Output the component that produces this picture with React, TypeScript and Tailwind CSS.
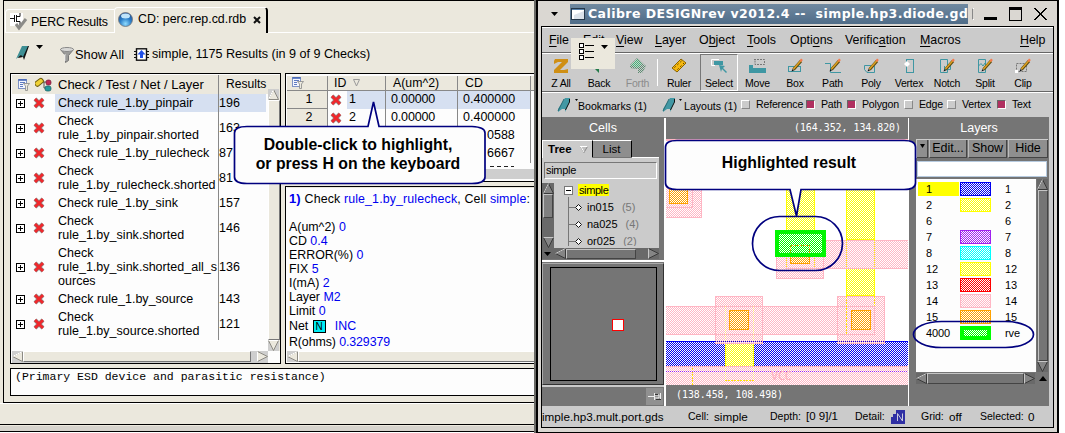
import React from "react";

const SANS = "font-['Liberation_Sans',Arial,sans-serif]";
const RAISED = "border border-t-white border-l-white border-b-[#777] border-r-[#777]";
const DARK_RAISED = "border border-t-[#c4c4c4] border-l-[#c4c4c4] border-b-[#444] border-r-[#444]";

/* ---------- icons ---------- */
const Cross = () => (
  <svg width="12" height="12" viewBox="0 0 12 12" className="shrink-0">
    <path d="M2 2L10 10M10 2L2 10" stroke="#8a8583" strokeWidth="4" />
    <path d="M2 2L10 10M10 2L2 10" stroke="#f0282c" strokeWidth="2.8" />
  </svg>
);
const Plus = () => (
  <svg width="9" height="9" viewBox="0 0 9 9" className="shrink-0" shapeRendering="crispEdges">
    <rect x=".5" y=".5" width="8" height="8" fill="#fff" stroke="#000" />
    <path d="M2 4.5H7M4.5 2V7" stroke="#000" />
  </svg>
);
const Marker = ({ dark = false }: { dark?: boolean }) => (
  <svg width="14" height="16" viewBox="0 0 14 16" className="shrink-0">
    {dark ? (
      <>
        <path d="M7 1H13L8 15L7 12L2 13Z" fill="#111" />
        <path d="M6 1H12L7 12L5 10L0 14Z" fill="#3e8f94" />
      </>
    ) : (
      <>
        <path d="M8 1H13V4L8 15V12L5 12L1 15V12Z" fill="#4398a4" />
        <path d="M12.5 2V5L8.5 13" stroke="#111" fill="none" />
        <path d="M1 14L7 2" stroke="#286b74" fill="none" />
      </>
    )}
  </svg>
);
const Down = ({ className = "" }: { className?: string }) => (
  <svg width="7" height="4" viewBox="0 0 7 4" className={"shrink-0 " + className}>
    <path d="M0 0H7L3.5 4Z" fill="#000" />
  </svg>
);
const PageFilter = () => (
  <svg width="12" height="12" viewBox="0 0 12 12" className="shrink-0">
    <rect x=".5" y=".5" width="8" height="9" fill="#f4f6ff" stroke="#7f93c4" />
    <path d="M.5 1H8.5" stroke="#3b5fb5" strokeWidth="1.5" />
    <path d="M2 3.5H7M2 5.5H5M2 7.5H5" stroke="#5f7bc0" />
    <path d="M5.500 4.500H11.500L9.500 7V11.500H7.500V7Z" fill="#eceadf" stroke="#888" strokeWidth=".8" />
  </svg>
);
const Arrow = ({ dir, dark = false }: { dir: "up" | "down" | "left" | "right"; dark?: boolean }) => {
  const d = { up: "M5 0L10 10H0Z", down: "M0 0H10L5 10Z", left: "M0 5L10 0V10Z", right: "M0 0L10 5L0 10Z" }[dir];
  return (
    <svg width="11" height="11" viewBox="-.5 -.5 11 11" className={"shrink-0 " + (dark ? "bg-[#696969]" : "bg-[#cecece]")}>
      <path d={d} fill={dark ? "#858585" : "#ebe8dd"} stroke={dark ? "#3a3a3a" : "#8c8a83"} />
      <path d={dir === "down" || dir === "right" ? "M0 0" + (dir === "down" ? "H10" : "V10") : dir === "up" ? "M5 0L0 10" : "M0 5L10 0"} fill="none" stroke={dark ? "#c8c8c8" : "#fff"} />
    </svg>
  );
};
const Pencil = () => (
  <>
    <path d="M7.500 11.500L15 3" stroke="#5a4a10" strokeWidth="3" />
    <path d="M7.500 11L15 2.500" stroke="#dda022" strokeWidth="1.600" />
    <path d="M14.300 3.200L16 1.300" stroke="#f47a4c" strokeWidth="2.400" />
    <path d="M5.500 13.500L6.500 11L8 12.500Z" fill="#111" />
  </>
);
const ToolIcon = ({ name }: { name: string }) => {
  const t = "#3f97a3";
  const art: Record<string, React.ReactNode> = {
    "Z All": <path d="M3 1H16V4L8 12H12L16 11V15H2V12L10 4H6L2 6V3Z" fill="#cf8f14" />,
    Back: <path d="M1 7L9 0V4H17V10H9V15Z" fill="#237a48" />,
    Forth: (
      <>
        <path d="M1 7L8 0L17 8L13 15H9V11L1 10Z" fill="#5d8c72" />
        <path d="M2 7L8 1L13 6L8 10Z" fill="#3fb878" />
        <path d="M1 7L8 0L17 8L13 15H9V11L1 10Z" fill="url(#stip)" />
      </>
    ),
    Ruler: (
      <>
        <path d="M2 10L11 1L16 5L7 14Z" fill="#f6b910" stroke="#8a6200" />
        <path d="M4.500 9.500L11.500 3M7.500 11.500L14 5" stroke="#3c2b00" strokeDasharray="1.500 2.500" />
      </>
    ),
    Select: (
      <>
        <path d="M1.500 1.500H9M1.500 1.500V7.500H5" stroke="#fff" fill="none" />
        <rect x="4" y="3" width="9" height="4" fill={t} />
        <path d="M9 7L15 8L13 10L17 14L16 15L12 11L11 14Z" fill={t} />
      </>
    ),
    Move: (
      <>
        <path d="M5 1.500H15.500V6.500H6V1" stroke="#777" strokeDasharray="2 1" fill="none" />
        <path d="M0 7H4V10H17V15H0Z" fill={t} />
      </>
    ),
    Box: (
      <>
        <rect x="2.500" y="8.500" width="12" height="5" fill="none" stroke={t} />
        <Pencil />
      </>
    ),
    Path: (
      <>
        <path d="M1 5.500H6.500V14.500H17" fill="none" stroke={t} />
        <Pencil />
      </>
    ),
    Poly: (
      <>
        <path d="M9 7.500H2.500V11.500L5 14.500H12.500V8" fill="none" stroke={t} />
        <Pencil />
      </>
    ),
    Vertex: (
      <>
        <rect x="6.500" y="1.500" width="7" height="13" fill="none" stroke={t} />
        <path d="M7 3L10 6L7 9L4 6Z" fill="#fff" />
      </>
    ),
    Notch: (
      <>
        <path d="M2.500 1.500H9.500V7.500H12.500V11.500H6.500V8M2.500 1.500V14.500H9.500V12" fill="none" stroke={t} />
        <Pencil />
      </>
    ),
    Split: (
      <>
        <path d="M2.500 1.500H9.500V14.500H2.500ZM2.500 8L5 5.500L7 8L9 5" fill="none" stroke={t} />
        <Pencil />
      </>
    ),
    Clip: (
      <>
        <path d="M2.500 5.500H12.500V13.500H2.500Z" fill="none" stroke="#777" strokeDasharray="2 1" />
        <Pencil />
        <rect x="1" y="12" width="3" height="3" fill="#fff" />
      </>
    ),
  };
  return (
    <svg width="18" height="16" viewBox="0 0 18 16" className="block">
      <defs>
        <pattern id="stip" width="2" height="2" patternUnits="userSpaceOnUse">
          <path d="M0 0h1v1H0zM1 1h1v1H1z" fill="#cbcbcb" />
        </pattern>
      </defs>
      {art[name]}
    </svg>
  );
};

/* ---------- results window ---------- */
const checks = [
  { lines: ["Check rule_1.by_pinpair"], n: "196", sel: true },
  { lines: ["Check", "rule_1.by_pinpair.shorted"], n: "163" },
  { lines: ["Check rule_1.by_rulecheck"], n: "87" },
  { lines: ["Check", "rule_1.by_rulecheck.shorted"], n: "81" },
  { lines: ["Check rule_1.by_sink"], n: "157" },
  { lines: ["Check", "rule_1.by_sink.shorted"], n: "146" },
  { lines: ["Check", "rule_1.by_sink.shorted_all_s", "ources"], n: "136" },
  { lines: ["Check rule_1.by_source"], n: "143" },
  { lines: ["Check", "rule_1.by_source.shorted"], n: "121" },
];

const CheckTable = () => (
  <div className="flex h-[291px] w-[271px] shrink-0 flex-col border border-black bg-[#fdfdfd] pt-px pl-px">
    <div className="flex h-[276px]">
      <div className="w-[256px] shrink-0">
        <div className="flex h-[19px] items-center bg-[#ebe8dd]">
          <div className="ml-[6px] w-[17px]"><PageFilter /></div>
          <svg width="17" height="15" viewBox="0 0 17 15" className="shrink-0">
            <path d="M8 5H11M9 5V11H12" stroke="#555" fill="none" />
            <rect x="0" y="3" width="9" height="5" rx="2" transform="rotate(-38 4 6)" fill="#eed034" stroke="#6d5c10" />
            <rect x="11" y="3" width="5" height="5" rx="2" fill="#c22753" stroke="#6c1a34" strokeWidth=".7" />
            <rect x="10" y="9" width="6" height="5" rx="2" fill="#259a9e" stroke="#155c60" strokeWidth=".7" />
          </svg>
          <span className="ml-[6px] w-[160px] text-[13px]">Check / Test / Net / Layer</span>
          <span className="h-full border-l border-[#888] pl-[7px] text-[12.1px] leading-[18px]">Results</span>
        </div>
        {checks.map((c) => (
          <div key={c.lines.join()} className="flex">
            <div className="flex w-[43px] shrink-0 items-center py-[2px] pl-[4px]">
              <Plus />
              <div className="ml-[8px]"><Cross /></div>
            </div>
            <div className={"w-[163px] shrink-0 py-[2px] pl-[3px] text-[12.5px] leading-[14px] tracking-[0.02px] whitespace-nowrap " + (c.sel ? "bg-[#d6e0f1]" : "")}>
              {c.lines.map((l) => <div key={l}>{l}</div>)}
            </div>
            <div className={"flex w-[48px] items-center border-l border-[#888] text-[12.5px] leading-[14px] " + (c.sel ? "bg-[#d6e0f1]" : "")}>{c.n}</div>
          </div>
        ))}
      </div>
      <div className="flex w-[12px] flex-col bg-[#ebe8dd] pt-[14px]">
        <Arrow dir="up" />
        <div className={"flex-1 bg-[#ebe8dd] " + RAISED} />
        <Arrow dir="down" />
      </div>
    </div>
    <div className="flex h-[12px] w-[256px] bg-[#cecece]">
      <Arrow dir="left" />
      <div className={"h-[11px] w-[228px] bg-[#ebe8dd] " + RAISED} />
      <div className="flex-1" />
      <Arrow dir="right" />
    </div>
  </div>
);

const ids = [
  ["1", "0.00000", "0.400000"],
  ["2", "0.00000", "0.400000"],
];
const ResultTable = () => (
  <div className="flex h-[109px] flex-col overflow-hidden border border-r-0 border-black bg-[#fdfdfd] pt-[2px] pl-px">
    <div className="flex h-[15px] shrink-0 items-center border-b border-[#888] bg-[#ebe8dd] text-[12.3px]">
      <div className="flex h-full w-[41px] items-center border-r border-[#888] pl-[5px]"><PageFilter /></div>
      <div className="flex h-full w-[58px] items-center border-r border-[#888] pl-[6px] leading-[14px]">
        ID
        <svg width="7" height="8" viewBox="0 0 7 8" className="ml-[7px]"><path d="M.5 .5H6.500L3.500 7Z" fill="#ebe8dd" stroke="#999" /></svg>
      </div>
      <div className="w-[72px] border-r border-[#888] pl-[7px] leading-[14px]">A(um^2)</div>
      <div className="w-[73px] border-r border-[#888] pl-[7px] leading-[14px]">CD</div>
    </div>
    {ids.map((r, i) => (
      <div key={r[0]} className="flex h-[18px] shrink-0 text-[12.5px] leading-[17px]">
        <div className="w-[41px] border-r border-b border-[#888] bg-[#ebe8dd] pl-[4px] text-center">{r[0]}</div>
        <div className="flex w-[19px] items-center pl-[2px]"><Cross /></div>
        <div className={"w-[39px] border-r border-[#888] pl-[2px] " + (i ? "" : "bg-[#d6e0f1]")}>{r[0]}</div>
        <div className={"w-[72px] border-r border-[#888] pl-[5px] tracking-[-0.15px] " + (i ? "" : "bg-[#d6e0f1]")}>{r[1]}</div>
        <div className={"w-[73px] border-r border-[#888] pl-[5px] " + (i ? "" : "bg-[#d6e0f1]")}>{r[2]}</div>
      </div>
    ))}
    {["0588", "6667"].map((v) => (
      <div key={v} className="flex h-[18px] shrink-0 text-[12.5px] leading-[17px]">
        <div className="ml-[171px] w-[73px] border-r border-[#888] pl-[29px]">{v}</div>
      </div>
    ))}
    <div className="flex h-[6px] shrink-0 items-center pl-[203px]">
      <div className="h-px w-[24px] bg-[repeating-linear-gradient(90deg,#222_0_4px,transparent_4px_7px)]" />
    </div>
    <div className="h-[10px] bg-[#cecece]" />
  </div>
);

const props = [["A(um^2)", "0"], ["CD", "0.4"], ["ERROR(%)", "0"], ["FIX", "5"], ["I(mA)", "2"], ["Layer", "M2"], ["Limit", "0"]];
const Details = () => (
  <div className="flex h-[178px] flex-col border border-r-0 border-black bg-[#fdfdfd] pl-px text-[12.4px] whitespace-pre">
    <div className="h-px bg-[#ebe8dd]" />
    <div className="mt-[4px] h-[14px] overflow-hidden pl-[2px] leading-[14px] tracking-[0.13px]">
      <b className="text-[13px] text-[#0000f0]">1) </b>Check <span className="text-[#0000f0]">rule_1.by_rulecheck</span>, Cell <span className="text-[#0000f0]">simple</span>:
    </div>
    <div className="mt-[14px] pl-[2px]">
      {props.map(([k, v]) => (
        <div key={k} className="h-[14px] leading-[14px]">{k} <span className="text-[#0000f0]">{v}</span></div>
      ))}
      <div className="flex h-[17px] items-center">
        Net <span className="ml-px flex size-[13px] items-center justify-center border border-black bg-[#00ecf4] text-[10px] leading-none">N</span>
        <span className="ml-[9px] text-[#0000f0]">INC</span>
      </div>
      <div className="h-[14px] leading-[14px] tracking-[-0.1px]">R(ohms) <span className="text-[#0000f0]">0.329379</span></div>
    </div>
    <div className="mt-auto mb-px flex h-[11px] bg-[#cecece]">
      <Arrow dir="left" />
      <div className={"flex-1 border-r-0 bg-[#ebe8dd] " + RAISED} />
    </div>
  </div>
);

const ResultsWindow = () => (
  <div className="flex h-[433px] w-[536px] shrink-0 flex-col border-r-2 border-[#6a6a66] bg-[#ebe8dd] text-black">
    <div className="ml-[3px] h-[403px] w-[531px] border-t border-b border-l border-black">
      <div className="flex h-[32px] items-end pl-px">
        <div className="flex h-[24px] w-[109px] items-center rounded-tl-sm border-t border-b border-l border-white pt-[2px]">
          <svg width="18" height="18" viewBox="0 0 18 18" className="ml-[4px] shrink-0">
            <rect x="0" y="0" width="13" height="13" fill="#fff" />
            <path d="M0 5.500H4M4.500 2V9M6.500 2V9M7 3.500H10V0M7 8.500H10V12" stroke="#111" fill="none" />
            <path d="M6 11L9 15L16 6" stroke="#8b8b88" strokeWidth="3" fill="none" />
          </svg>
          <span className="ml-[3px] text-[12.4px] tracking-[-0.2px] whitespace-nowrap">PERC Results</span>
        </div>
        <div className="flex h-[26px] w-[154px] items-center rounded-t-sm border-t border-r-2 border-l border-t-white border-r-black border-l-white pb-[2px]">
          <svg width="15" height="15" viewBox="0 0 15 15" className="ml-[3px] shrink-0">
            <defs>
              <radialGradient id="orb" cx=".5" cy=".8" r=".8">
                <stop offset="0" stopColor="#8fdcff" /><stop offset=".5" stopColor="#2c7fc9" /><stop offset="1" stopColor="#1c4c94" />
              </radialGradient>
            </defs>
            <circle cx="7.500" cy="7.500" r="7" fill="url(#orb)" stroke="#777" strokeWidth=".8" />
            <ellipse cx="7.500" cy="4" rx="4.500" ry="2.500" fill="#bfe4fb" />
          </svg>
          <span className="ml-[5px] text-[12.4px] whitespace-nowrap">CD: perc.rep.cd.rdb</span>
          <svg width="8" height="8" viewBox="0 0 8 8" className="ml-[7px] shrink-0"><path d="M1 1L7 7M7 1L1 7" stroke="#111" strokeWidth="2" /></svg>
        </div>
        <div className="h-px flex-1 bg-white" />
      </div>
      <div className="flex h-[40px] items-center pl-[12px]">
        <Marker dark />
        <Down className="mb-[12px] ml-[6px]" />
        <svg width="14" height="17" viewBox="0 0 14 17" className="ml-[17px] mt-[4px] shrink-0">
          <path d="M.5 2.500L5.500 8.500V15.500L8.500 13.500V8.500L13.500 2.500Z" fill="#9b9b99" stroke="#777" />
          <ellipse cx="7" cy="2.500" rx="6.500" ry="2" fill="#d8d8d6" stroke="#888" />
          <path d="M5 7V14" stroke="#eee" />
        </svg>
        <span className="ml-px mt-[3px] w-[59px] text-[12.8px] whitespace-nowrap">Show All</span>
        <svg width="15" height="13" viewBox="0 0 15 13" className="mt-[2px] shrink-0">
          <path d="M0 3.500H15M0 6.500H15M0 9.500H15" stroke="#111" />
          <rect x="2.500" y=".8" width="10" height="11.400" fill="#fff" stroke="#111" strokeWidth="1.400" />
          <path d="M7.500 2L11.500 6.500H9V10H6V6.500H3.500Z" fill="#1f4fe8" />
        </svg>
        <span className="mt-[3px] ml-[3px] text-[12.6px] whitespace-nowrap">simple, 1175 Results (in 9 of 9 Checks)</span>
      </div>
      <div className="flex gap-[4px] pl-[6px]">
        <CheckTable />
        <div className="flex min-w-0 flex-1 flex-col gap-[4px]">
          <ResultTable />
          <Details />
        </div>
      </div>
      <div className="mt-[4px] ml-[6px] h-[28px] border border-r-0 border-black bg-[#fdfdfd] pt-px pl-[4px] font-['Liberation_Mono','Courier_New',monospace] text-[11.5px] leading-[14px] whitespace-nowrap">
        (Primary ESD device and parasitic resistance)
      </div>
    </div>
    <div className="h-[22px] border-t border-b border-t-white border-b-black" />
    <div className="mt-px h-[5px] bg-[#d6d3cc]" />
    <div className="h-px bg-black" />
    <div className="flex-1 bg-white" />
  </div>
);

/* ---------- layout window ---------- */
const menus: [string, number, string][] = [
  ["File", 0, "w-[34px]"], ["Edit", 0, "w-[33px]"], ["View", 0, "w-[39px]"], ["Layer", 0, "w-[44px]"],
  ["Object", 1, "w-[48px]"], ["Tools", 0, "w-[43px]"], ["Options", 4, "w-[55px]"],
  ["Verification", 7, "w-[75px]"], ["Macros", 0, "w-[100px]"], ["Help", 0, "w-[30px]"],
];
const tools: [string, string][] = [
  ["Z All", "w-[38px]"], ["Back", "w-[38px]"], ["Forth", "w-[39px]"], ["Ruler", "w-[42px]"], ["Select", "w-[38px]"], ["Move", "w-[39px]"], ["Box", "w-[36px]"],
  ["Path", "w-[39px]"], ["Poly", "w-[38px]"], ["Vertex", "w-[38px]"], ["Notch", "w-[38px]"], ["Split", "w-[38px]"], ["Clip", "w-[38px]"],
];
const toggles: [string, boolean, string][] = [
  ["Reference", false, "w-[65px]"], ["Path", true, "w-[41px]"], ["Polygon", true, "w-[57px]"],
  ["Edge", false, "w-[43px]"], ["Vertex", false, "w-[50px]"], ["Text", true, "w-[38px]"],
];
const PAT = ["blue", "yellow", "pink", "orange", "purple", "cyan", "red", "lime"];
const COL: Record<string, string> = {
  blue: "#0000f0", yellow: "#ffff00", pink: "#ffb6c4", orange: "#ffa200", purple: "#a020f0", cyan: "#00ffff", red: "#ff0000", lime: "#00ff00",
};
const layers: [string, string, string][] = [
  ["1", "blue", "1"], ["2", "yellow", "2"], ["6", "", "6"], ["7", "purple", "7"], ["8", "cyan", "8"],
  ["12", "yellow", "12"], ["13", "red", "13"], ["14", "pink", "14"], ["15", "orange", "15"], ["4000", "lime", "rve"],
];

const Patterns = () => (
  <defs>
    {PAT.map((p) => (
      <pattern key={p} id={"p-" + p} width="2" height="2" patternUnits="userSpaceOnUse">
        <path d="M1 0h1v1H1zM0 1h1v1H0z" fill={COL[p]} />
      </pattern>
    ))}
  </defs>
);
const Shape = ({ c, x, y, w, h, edge = true }: { c: string; x: number; y: number; w: number; h: number; edge?: boolean }) => (
  <>
    <rect x={x} y={y} width={w} height={h} fill={`url(#p-${c})`} />
    {edge && <rect x={x + 0.5} y={y + 0.5} width={w - 1} height={h - 1} fill="none" stroke={COL[c]} />}
  </>
);

const LayoutCanvas = () => (
  <svg width="242" height="246" viewBox="666 139 242 246" className="block bg-white" shapeRendering="crispEdges">
    <Patterns />
    <Shape c="pink" x={660} y={170} w={42} h={48} />
    <Shape c="pink" x={660} y={170} w={33} h={38} />
    <Shape c="orange" x={669} y={180} w={19} h={24} />
    <Shape c="pink" x={660} y={139} w={250} h={2} />
    <Shape c="yellow" x={786} y={180} w={29} h={52} />
    <Shape c="yellow" x={846} y={180} w={29} h={60} />
    <Shape c="yellow" x={846} y={268} w={29} h={28} />
    <Shape c="pink" x={776} y={231} w={48} h={48} />
    <Shape c="pink" x={786} y={240} w={124} h={29} />
    <path d="M786.500 232V268M814.500 232V268M846.500 240V268M874.500 240V268" stroke="#ffff00" strokeDasharray="1 1" />
    <Shape c="orange" x={790} y={245} w={20} h={19} />
    <Shape c="pink" x={660} y={306} w={215} h={29} />
    <Shape c="blue" x={660} y={341} w={250} h={26} />
    <Shape c="pink" x={660} y={366} w={250} h={24} />
    <rect x="725" y="341" width="29" height="25" fill="#fff" />
    <Shape c="yellow" x={725} y={341} w={29} h={25} edge={false} />
    <path d="M725.500 344V366M753.500 344V366" stroke="#ffff00" />
    {[715, 837].map((x) => (
      <g key={x}>
        <rect x={x} y="341" width="48" height="3" fill="#fff" />
        <Shape c="pink" x={x} y={296} w={48} h={48} />
        <rect x={x + 14} y="310" width="20" height="20" fill="#fff" />
        <Shape c="orange" x={x + 14} y={310} w={20} h={20} />
      </g>
    ))}
    <path d="M715 341.500H763M837 341.500H885" stroke="#0000e6" strokeDasharray="1 1" />
    <path d="M725.500 306V341M753.500 306V341M725.500 366V380M753.500 366V380" fill="none" stroke="#ffe27a" strokeDasharray="1 1" />
    <path d="M846.500 296V334M874.500 296V306M692.500 368V385M725 380.500H754" fill="none" stroke="#ffe500" strokeDasharray="2 1" />
    <path d="M666 371.500H908" stroke="#a020f0" strokeDasharray="1 1" />
    <text x="771" y="380" fontSize="12" textLength="21" fill="#ffaebd" className="font-['DejaVu_Sans_Mono',monospace]">VCC</text>
    <rect x="777" y="232" width="47" height="23" fill="#fff" />
    <Shape c="lime" x={777} y={232} w={47} h={23} edge={false} />
    <path d="M790.500 254V245.500H809.500V254" fill="none" stroke="#e5a500" strokeDasharray="2 1" />
    <rect x="777" y="232" width="47" height="23" fill="none" stroke="#00f600" strokeWidth="4" />
  </svg>
);

const CellsPanel = () => (
  <div className="flex h-[289px] w-[122px] shrink-0 flex-col">
    <div className="h-[21px] text-center text-[12.5px] leading-[22px] text-white">Cells</div>
    <div className="flex h-[20px] w-[117px] items-end">
      <div className="flex h-[18px] w-[50px] items-center border-t border-l border-white bg-[#cbcbcb] pl-[5px] text-[11.5px]">
        <b>Tree</b>
        <svg width="8" height="7" viewBox="0 0 8 7" className="ml-[8px]"><path d="M.5 .5H7.500L4 6.500Z" fill="#c0c0c0" stroke="#888" /><path d="M0 .5H7.500M.5 0L4 6" stroke="#fff" /></svg>
      </div>
      <div className="mb-px h-[17px] w-[40px] border-t border-r border-l border-t-white border-r-black border-l-black bg-[#8e8e8e] pr-px text-center text-[11.5px] leading-[16px]">List</div>
      <div className="h-px flex-1 bg-white" />
    </div>
    <div className="h-[101px] w-[117px] bg-[#cbcbcb]">
      <div className="h-[4px]" />
      <div className="ml-[2px] h-[17px] w-[113px] border border-t-[#777] border-r-white border-b-white border-l-[#777] pl-px text-[11px] leading-[14px] tracking-[-0.3px]">simple</div>
      <div className="mt-[4px] flex h-[65px] overflow-hidden">
        <div className="flex w-[12px] shrink-0 flex-col items-center bg-[#696969]">
          <Arrow dir="up" dark />
          <div className={"h-[24px] w-[10px] bg-[#808080] " + DARK_RAISED} />
          <div className="flex-1" />
          <Arrow dir="down" dark />
        </div>
        <div className="h-[63px] overflow-hidden">
          <div className="flex h-[14px] items-center">
            <div className="ml-[10px] flex size-[9px] items-center justify-center border border-[#777] bg-white"><div className="h-px w-[5px] bg-black" /></div>
            <span className="ml-[5px] bg-[#ffff00] px-px text-[11px] leading-[12px] tracking-[-0.4px]">simple</span>
          </div>
          {[["in015", "(5)"], ["na025", "(4)"], ["or025", "(2)"]].map(([n, c]) => (
            <div key={n} className="flex h-[17px] items-center text-[11px]">
              <svg width="18" height="17" viewBox="0 0 18 17" className="ml-[14px] shrink-0">
                <path d="M.5 0V17M0 10.500H7" stroke="#777" /><path d="M10.500 7.500L13.500 10.500L10.500 13.500L7.500 10.500Z" fill="#fff" stroke="#111" />
              </svg>
              <span className="mt-[4px] ml-px">{n}</span>
              <span className="mt-[4px] ml-[8px] text-[#777]">{c}</span>
            </div>
          ))}
        </div>
      </div>
      <div className="flex h-[11px] items-center bg-[#696969]">
        <Down className="ml-[2px]" />
        <div className="ml-[4px]"><Arrow dir="left" dark /></div>
        <div className={"h-[10px] w-[70px] bg-[#757575] " + DARK_RAISED} />
        <div className="flex-1" />
        <Arrow dir="right" dark />
      </div>
    </div>
    <div className="h-[3px] border-b-2 border-white" />
    <div className="mt-px h-[122px] border border-[#aaa] border-r-[#333] border-b-[#333] py-[3px] pr-[6px] pl-[7px]">
      <div className="relative h-[114px] border border-black">
        <div className="absolute top-[51px] left-[61px] size-[12px] border border-[#f00] bg-white" />
      </div>
    </div>
    <div className="h-[2px] bg-[#cbcbcb]" />
    <div className="mt-px flex h-[17px] justify-end pr-px">
      <div className="flex w-[17px] items-center justify-center bg-[#909090]">
        <svg width="14" height="9" viewBox="0 0 14 9"><path d="M0 4.500H6M6.500 1V8M7 3H11V6H7M12.500 1V8" stroke="#eee" fill="none" /><path d="M8 7.500H13M7 2.500H10" stroke="#333" /></svg>
      </div>
    </div>
  </div>
);

const LayersPanel = () => (
  <div className="flex h-[289px] w-[140px] shrink-0 flex-col pl-[7px]">
    <div className="h-[22px] w-[132px] pr-[6px] text-center text-[12.5px] leading-[22px] text-white">Layers</div>
    <div className="flex h-[19px] w-[132px] gap-px border-t border-l border-[#ccc] text-[12.5px] leading-[17px]">
      <div className="flex w-[11px] justify-center border-r border-b border-[#444] bg-[#8f8f8f] pt-[4px]"><svg width="5" height="4"><path d="M0 0H5L2.500 4Z" /></svg></div>
      {[["Edit...", "w-[38px]"], ["Show", "w-[39px]"], ["Hide", "w-[40px]"]].map(([t, w]) => (
        <div key={t} className={"border-r border-b border-l border-r-[#444] border-b-[#444] border-l-[#bbb] bg-[#8f8f8f] text-center tracking-[-0.1px] " + w}>{t}</div>
      ))}
    </div>
    <div className="mt-[3px] ml-px h-[16px] w-[130px] border border-[#b7cbe0] bg-white" />
    <div className="mt-[2px] flex">
      <div className="h-[193px] w-[120px] bg-[#fdfdfd] pt-[2px]">
        {layers.map(([n, c, name]) => (
          <div key={n} className="flex h-[16px] items-center text-[11px] tracking-[-0.1px]">
            <div className={"ml-[2px] h-[14px] w-[41px] pl-[8px] leading-[14px] " + (n === "1" ? "bg-[#ffff00]" : "")}>{n}</div>
            <svg width="31" height="14" viewBox="0 0 31 14" className="ml-px" shapeRendering="crispEdges">
              {c && <Shape c={c} x={0} y={0} w={31} h={14} />}
              {c === "lime" && <rect x="2" y="2" width="27" height="10" fill="none" stroke="#0f0" strokeWidth="4" />}
            </svg>
            <span className="ml-[14px]">{name}</span>
          </div>
        ))}
      </div>
      <div className="ml-[1px] flex w-[11px] flex-col items-center bg-[#696969]">
        <Arrow dir="up" dark />
        <div className={"w-[10px] flex-1 bg-[#757575] " + DARK_RAISED} />
        <Arrow dir="down" dark />
      </div>
    </div>
    <div className="mt-px flex h-[11px] items-center">
      <Arrow dir="left" dark />
      <div className={"h-[11px] w-[97px] bg-[#757575] " + DARK_RAISED} />
      <Arrow dir="right" dark />
      <svg width="8" height="5" className="ml-[4px]"><path d="M0 5H8L4 0Z" /></svg>
    </div>
  </div>
);

const LayoutWindow = () => (
  <div className="h-[433px] w-[523px] shrink-0 border-t border-r-2 border-b border-l-2 border-black bg-[#dad7d2] text-black">
    <div className="flex h-[25px] items-center pt-px">
      <Down className="ml-[13px]" />
      <div className="ml-[12px] flex h-[20px] w-[398px] items-center overflow-hidden bg-linear-to-b from-[#7089a0] to-[#4f6c88]">
        <svg width="14" height="12" viewBox="0 0 14 12" className="ml-px shrink-0"><rect x=".5" y=".5" width="13" height="11" fill="#fff" stroke="#26384a" /><path d="M1 1.500H13" stroke="#5882ac" /><path d="M3 11V7L13 3V11Z" fill="#dbe2ea" /></svg>
        <span className="ml-[3px] w-[380px] overflow-hidden font-['DejaVu_Sans',Verdana,sans-serif] text-[12.5px] font-bold tracking-[0.44px] whitespace-pre text-white">Calibre DESIGNrev v2012.4 --  simple.hp3.diode.gd</span>
      </div>
      <div className="ml-[4px] h-[12px] w-[2px] border-y border-l border-y-white border-l-[#888]" />
      <svg width="64" height="14" viewBox="0 0 64 14" className="ml-[10px]" shapeRendering="crispEdges">
        <rect x="0" y="10" width="13" height="3" />
        <rect x="25.500" y="1.500" width="12" height="12" fill="none" stroke="#000" /><rect x="25" y="0" width="13" height="3" />
        <path d="M50.500 1L62.500 13M62.500 1L50.500 13" stroke="#000" />
      </svg>
    </div>
    <div className="ml-[3px] h-[402px] w-[513px] border border-black bg-[#cbcbcb]">
      <div className="h-[26px] border-t border-b border-t-white border-b-[#666]">
        <div className="flex h-full items-center pl-[7px] text-[12.4px] whitespace-nowrap">
          {menus.map(([m, u, w]) => (
            <span key={m} className={w}>{m.slice(0, u)}<u className="underline-offset-2">{m[u]}</u>{m.slice(u + 1)}</span>
          ))}
        </div>
      </div>
      <div className="flex h-[39px] border-t border-b border-t-white border-b-[#666] text-[10.5px] tracking-[-0.2px]">
        {tools.map(([t, w]) => (
          <React.Fragment key={t}>
            <div className={"flex shrink-0 flex-col items-center " + w + (t === "Select" ? " border border-t-[#777] border-r-white border-b-white border-l-[#777] pt-[3px]" : " pt-[4px]") + (t === "Forth" ? " text-[#8c8c8c]" : "")}>
              <ToolIcon name={t} />
              <span className="mt-[2px] leading-[14px]">{t}</span>
            </div>
            {t === "Forth" && <div className="mt-[5px] h-[27px] w-px bg-white" />}
          </React.Fragment>
        ))}
      </div>
      <div className="flex h-[25px] items-center border-t border-white pl-[15px] text-[10.6px] whitespace-nowrap">
        <Marker />
        <svg width="3" height="2" className="mb-[10px] ml-[4px]"><path d="M0 0H3L1.500 2Z" /></svg>
        <span className="mt-[4px] w-[84px]">Bookmarks (1)</span>
        <Marker />
        <svg width="3" height="2" className="mb-[10px] ml-[3px]"><path d="M0 0H3L1.500 2Z" /></svg>
        <span className="mt-[4px] w-[59px] pl-[2px]">Layouts (1)</span>
        {toggles.map(([t, on, w]) => (
          <span key={t} className={"flex shrink-0 items-center gap-[6px] tracking-[-0.2px] " + w}>
            <span className={"size-[9px] shrink-0 border " + (on ? "border-t-[#666] border-r-white border-b-white border-l-[#666] bg-[#b03060]" : "border-t-white border-r-[#888] border-b-[#888] border-l-white")} />
            {t}
          </span>
        ))}
      </div>
      <div className="flex h-[289px] w-[511px] bg-[#757575]">
        <CellsPanel />
        <div className="mt-px w-[245px] shrink-0 border-r border-l-2 border-white">
          <div className="h-[21px] pr-[7px] text-right font-['DejaVu_Sans_Mono',monospace] text-[9.9px] leading-[20px] text-white">(164.352, 134.820)</div>
          <LayoutCanvas />
          <div className="pl-[10px] font-['DejaVu_Sans_Mono',monospace] text-[9.9px] leading-[20px] text-white">(138.458, 108.498)</div>
        </div>
        <LayersPanel />
        <div className="flex-1 bg-[#cbcbcb]" />
      </div>
      <div className="flex h-[21px] items-center text-[10.5px] whitespace-nowrap">
        <span className="w-[146px] text-[11.7px]">imple.hp3.mult.port.gds</span>
        <span className="w-[26px]">Cell:</span>
        <span className="w-[56px] text-[11.7px]">simple</span>
        <span className="w-[36px]">Depth:</span>
        <span className="w-[49px] text-[11.5px]">[0 9]/1</span>
        <span className="w-[36px]">Detail:</span>
        <svg width="14" height="14" viewBox="0 0 14 14" className="mr-[16px] shrink-0"><path d="M0 7H2V4H5V0H14V14H0Z" fill="#3030a4" /><path d="M6.500 11V3.500L11.500 11V3.500" stroke="#ccd" fill="none" /></svg>
        <span className="w-[28px]">Grid:</span>
        <span className="w-[31px] text-[11.7px]">off</span>
        <span className="w-[48px]">Selected:</span>
        <span className="text-[11.7px]">0</span>
      </div>
    </div>
  </div>
);

/* ---------- annotations ---------- */
const Overlays = () => (
  <>
    <div className="absolute top-[38px] left-[571px] flex h-[31px] w-[44px] items-start bg-[#ebe8dd] pt-[5px] pl-[8px]">
      <svg width="16" height="18" viewBox="0 0 16 18" shapeRendering="crispEdges">
        {[0, 6, 12].map((y) => (
          <g key={y}><rect x=".5" y={y + 0.5} width="4" height="4" fill="#fff" stroke="#000" /><path d={`M6 ${y + 2.5}H15`} stroke="#000" /></g>
        ))}
      </svg>
      <Down className="mt-[2px] ml-[6px]" />
    </div>
    <svg width="1065" height="433" viewBox="0 0 1065 433" className="pointer-events-none absolute top-0 left-0">
      <g stroke="#00007f" strokeWidth="1.700">
        <path d="M247 126.500H368L373.500 102L379 126.500H472Q485 127 485 133V177Q485 183.500 472 183.500H247Q234.500 183.500 234.500 177V133Q234.500 126.500 247 126.500Z" fill="#fdfdfd" />
        <path d="M677 140.500H904Q915.500 140.500 915.500 147V183Q915.500 189.500 904 189.500H801L796.500 216L790 189.500H677Q665.500 189.500 665.500 183V147Q665.500 140.500 677 140.500Z" fill="#fdfdfd" />
        <rect x="752.500" y="216.500" width="90" height="54" rx="27" fill="none" />
        <rect x="913.500" y="321.500" width="120" height="26" rx="28" ry="13" fill="none" />
      </g>
    </svg>
    <div className="absolute top-[135px] left-[233px] w-[250px] text-center text-[15.8px] leading-[19px] font-bold whitespace-nowrap">
      Double-click to highlight,<br />or press H on the keyboard
    </div>
    <div className="absolute top-[153px] left-[664px] w-[250px] text-center text-[15.8px] leading-[19px] font-bold">Highlighted result</div>
  </>
);

export default function App() {
  return (
    <div className={"relative flex h-[433px] w-[1065px] overflow-hidden bg-white " + SANS}>
      <ResultsWindow />
      <LayoutWindow />
      <Overlays />
    </div>
  );
}
